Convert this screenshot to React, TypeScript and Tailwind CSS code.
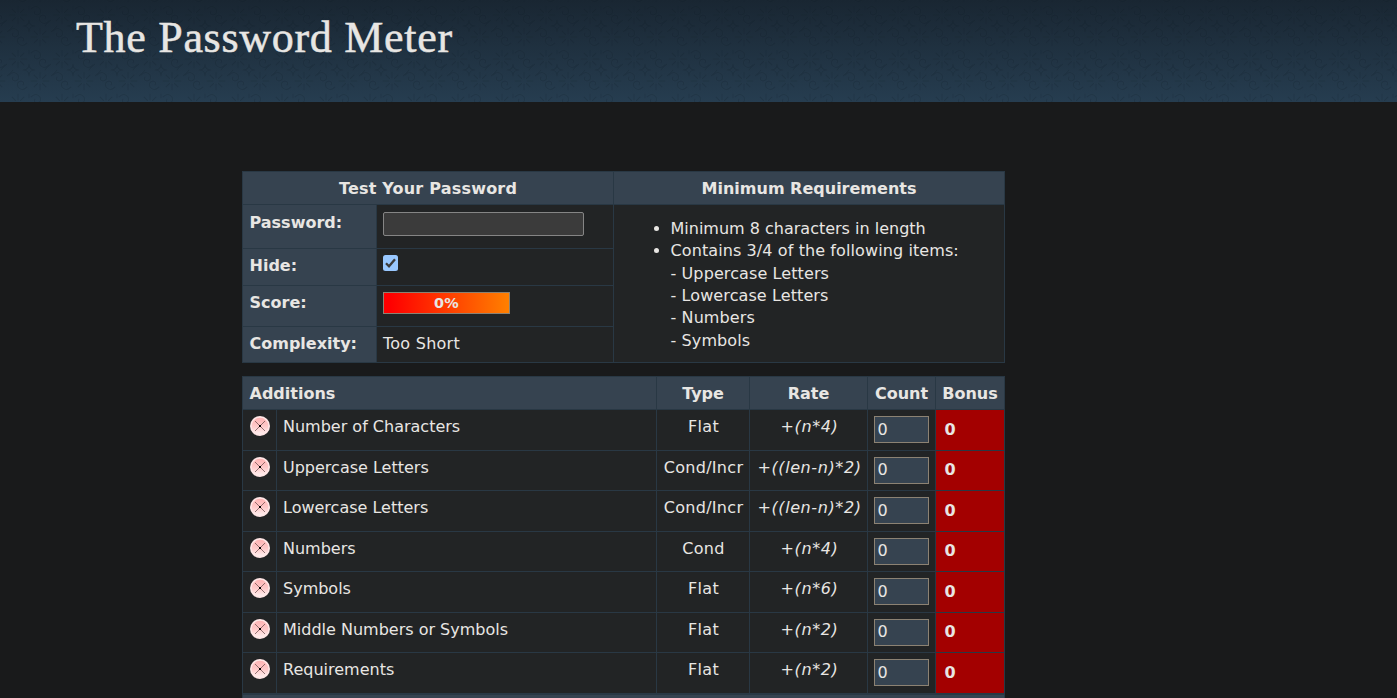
import { useState } from 'react';

type Rule = { name: string; type: string; rate: string; shift: boolean };

const additions: Rule[] = [
  { name: 'Number of Characters', type: 'Flat', rate: '+(n*4)', shift: false },
  { name: 'Uppercase Letters', type: 'Cond/Incr', rate: '+((len-n)*2)', shift: true },
  { name: 'Lowercase Letters', type: 'Cond/Incr', rate: '+((len-n)*2)', shift: false },
  { name: 'Numbers', type: 'Cond', rate: '+(n*4)', shift: true },
  { name: 'Symbols', type: 'Flat', rate: '+(n*6)', shift: false },
  { name: 'Middle Numbers or Symbols', type: 'Flat', rate: '+(n*2)', shift: true },
  { name: 'Requirements', type: 'Flat', rate: '+(n*2)', shift: false },
];

function FailIcon() {
  return (
    <svg width="20" height="20" viewBox="0 0 20 20" className="block">
      <defs>
        <linearGradient id="fail" x1="0" y1="0" x2="0" y2="1">
          <stop offset="0" stopColor="#ffb4b4" />
          <stop offset="0.5" stopColor="#ffc8c8" />
          <stop offset="1" stopColor="#fff0f0" />
        </linearGradient>
      </defs>
      <circle cx="10" cy="10" r="10" fill="#ffe6e6" />
      <circle cx="10" cy="10" r="8.3" fill="url(#fail)" />
      <path d="M5 5 L15 15 M15 5 L5 15" stroke="#4a3030" strokeWidth="1" opacity="0.6" />
      <rect x="9" y="9" width="2" height="2" fill="#000" />
    </svg>
  );
}

function HeaderTexture() {
  return (
    <svg className="absolute inset-0 h-full w-full" aria-hidden="true">
      <defs>
        <pattern id="swirl" x="7" y="4" width="44" height="44" patternUnits="userSpaceOnUse">
          <g fill="none" stroke="#04101a" strokeWidth="1.1" opacity="0.15" strokeLinecap="round">
            <path d="M11 2v6M11 14v6M2 11h6M14 11h6M5 5l3.5 3.5M13.5 13.5L17 17M17 5l-3.5 3.5M8.5 13.5L5 17" />
            <path d="M33 24v6M33 36v6M24 33h6M36 33h6M27 27l3.5 3.5M35.5 35.5L39 39M39 27l-3.5 3.5M30.5 35.5L27 39" />
            <path d="M24 5q5-5 9 0q2 5-3 6q-4-1-2-4M42 17q-5 5-9 0q-2-5 3-6q4 1 2 4" />
            <path d="M2 27q5-5 9 0q2 5-3 6q-4-1-2-4M20 39q-5 5-9 0q-2-5 3-6q4 1 2 4" />
            <path d="M22 2v4M22 16q0 6 6 6M16 22q6 0 6-6M22 28q0-6-6-6M28 22q-6 0-6 6M44 16q-4 3-6 6M0 28q4-3 6-6" />
          </g>
        </pattern>
      </defs>
      <rect width="100%" height="100%" fill="url(#swirl)" />
    </svg>
  );
}

const line = 'border-[#293844]';

export default function App() {
  const [hide, setHide] = useState(true);
  return (
    <div className="h-[698px] overflow-hidden bg-[#191a1b] font-['DejaVu_Sans',Verdana,sans-serif] text-[16px] leading-[22px] text-[#e8e6e3]">
      <header className="relative h-[102px] bg-linear-to-b from-[#192632] to-[#263d50] pl-[76px]">
        <HeaderTexture />
        <h1 className="relative pt-[13px] font-['Liberation_Serif',Georgia,serif] text-[44px] leading-[50px] tracking-[0.7px] [-webkit-text-stroke:0.5px_#e8e6e3]">
          The Password Meter
        </h1>
      </header>

      <main className="ml-[242px] w-[763px] pt-[69px]">
        <section className={`grid h-[192px] grid-cols-[134px_237px_391px] grid-rows-[33px_44px_37px_41px_36px] border-l border-t bg-[#222425] ${line}`}>
          <h2 className={`col-span-2 border-b border-r bg-[#364350] pt-[6px] text-center font-bold tracking-[0.2px] ${line}`}>Test Your Password</h2>
          <h2 className={`border-b border-r bg-[#364350] pt-[6px] text-center font-bold ${line}`}>Minimum Requirements</h2>

          <div className={`border-b border-r bg-[#364350] pl-[6.5px] pt-[7px] font-bold ${line}`}>Password:</div>
          <div className={`border-b border-r pl-[6px] pt-[7px] ${line}`}>
            <input type="password" className="block h-[24px] w-[201px] rounded-[2px] border border-[#858585] bg-[#3b3b3b] px-1 outline-none" />
          </div>
          <ul className={`row-span-4 list-disc border-b border-r pl-[56.5px] pt-[12.7px] leading-[22.4px] ${line}`}>
            <li>Minimum 8 characters in length</li>
            <li className="tracking-[0.1px]">
              Contains 3/4 of the following items:
              <br />- Uppercase Letters
              <br />- Lowercase Letters
              <br />- Numbers
              <br />- Symbols
            </li>
          </ul>

          <div className={`border-b border-r bg-[#364350] pl-[6.5px] pt-[6px] font-bold ${line}`}>Hide:</div>
          <div className={`border-b border-r pl-[6px] pt-[6px] ${line}`}>
            <button
              type="button"
              role="checkbox"
              aria-checked={hide}
              aria-label="Hide"
              onClick={() => setHide(!hide)}
              className="block h-[16px] w-[15px] rounded-[2.5px] bg-[#99c8ff]"
            >
              {hide && (
                <svg width="15" height="16" viewBox="0 0 15 16" fill="none" className="block">
                  <path d="M3 8.2 L6 11.2 L12 4.2" stroke="#3b3b3b" strokeWidth="2.3" />
                </svg>
              )}
            </button>
          </div>

          <div className={`border-b border-r bg-[#364350] pl-[6.5px] pt-[6px] font-bold ${line}`}>Score:</div>
          <div className={`border-b border-r pl-[6px] pt-[6px] ${line}`}>
            <div className="h-[22px] w-[127px] border border-[#8c8273] bg-linear-to-r/srgb from-[#ff0000] from-5% to-[#ff8000] text-center text-[14.4px] font-bold leading-[20px] tracking-[0.3px]">
              0%
            </div>
          </div>

          <div className={`border-b border-r bg-[#364350] pl-[6.5px] pt-[6px] font-bold ${line}`}>Complexity:</div>
          <div className={`border-b border-r pl-[6px] pt-[6px] tracking-[0.25px] ${line}`}>Too Short</div>
        </section>

        <section className={`mt-[13px] grid grid-cols-[34px_380px_93px_118px_68px_69px] grid-rows-[33px_41px_40px_41px_40px_41px_40px_41px_33px] border-l border-t bg-[#222425] ${line}`}>
          <h2 className={`col-span-2 border-b border-r bg-[#364350] pl-[6.5px] pt-[6px] font-bold ${line}`}>Additions</h2>
          {['Type', 'Rate', 'Count', 'Bonus'].map((title) => (
            <h2 key={title} className={`border-b border-r bg-[#364350] pt-[6px] text-center font-bold ${line}`}>{title}</h2>
          ))}
          {additions.map((rule) => (
            <div key={rule.name} className="contents">
              <div className={`border-b border-r pl-[7px] pt-[6px] ${line}`}><FailIcon /></div>
              <div className={`border-b border-r pl-[6px] pt-[6px] ${line}`}>{rule.name}</div>
              <div className={`whitespace-nowrap border-b border-r pl-px pt-[6px] text-center tracking-[0.3px] ${line}`}>{rule.type}</div>
              <div className={`whitespace-nowrap border-b border-r pl-[2px] pt-[6px] text-center italic tracking-[0.6px] ${line}`}>{rule.rate}</div>
              <div className={`border-b border-r pl-[6px] pt-[6px] ${line}`}>
                <div className={`h-[27px] w-[55px] border border-[#8c8273] bg-[#364350] pl-[2.5px] ${rule.shift ? 'pt-[1px]' : 'pt-[2px]'}`}>0</div>
              </div>
              <div className={`border-b border-r bg-[#a30000] pl-[8.5px] font-bold ${line} ${rule.shift ? 'pt-[8px]' : 'pt-[9px]'}`}>0</div>
            </div>
          ))}
          <div className={`col-span-6 border-r border-t bg-[#364350] ${line}`} />
        </section>
      </main>
    </div>
  );
}
